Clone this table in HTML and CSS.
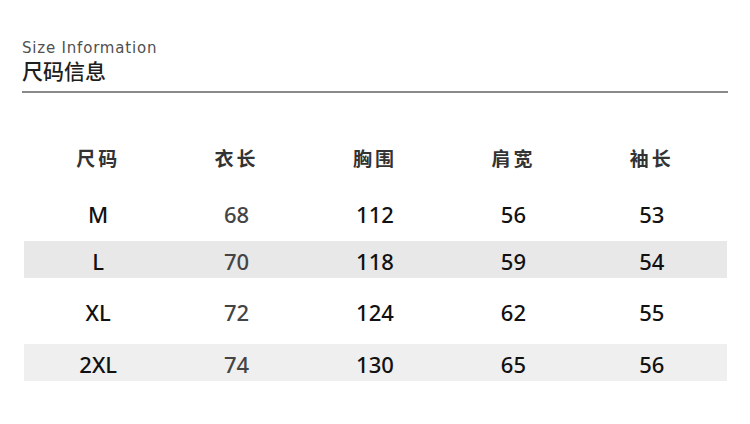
FILE: index.html
```html
<!DOCTYPE html>
<html lang="zh-CN">
<head>
<meta charset="utf-8">
<title>尺码信息</title>
<link rel="stylesheet" href="styles.css">
</head>
<body>
<div class="page">
  <header class="title-block">
    <div class="title-en">Size Information</div>
    <div class="title-cn">尺码信息</div>
  </header>
  <div class="size-table">
    <div class="row head">
      <div>尺码</div><div>衣长</div><div>胸围</div><div>肩宽</div><div>袖长</div>
    </div>
    <div class="row r-m">
      <div>M</div><div class="soft">68</div><div>112</div><div>56</div><div>53</div>
    </div>
    <div class="row shade r-l">
      <div>L</div><div class="soft">70</div><div>118</div><div>59</div><div>54</div>
    </div>
    <div class="row r-xl">
      <div>XL</div><div class="soft">72</div><div>124</div><div>62</div><div>55</div>
    </div>
    <div class="row shade light r-2xl">
      <div>2XL</div><div class="soft">74</div><div>130</div><div>65</div><div>56</div>
    </div>
  </div>
</div>
</body>
</html>
```
FILE: styles.css
```css
html, body {
  margin: 0;
  padding: 0;
  background: #ffffff;
}
.page {
  width: 750px;
  height: 424px;
  overflow: hidden;
  font-family: "Noto Sans", "Noto Sans CJK SC", sans-serif;
}
.title-block {
  margin: 0 22px 0 22px;
  padding-top: 39px;
  border-bottom: 2px solid #8a8a8a;
  height: 52px;
}
.title-en {
  font-family: "DejaVu Sans", sans-serif;
  font-size: 15px;
  line-height: 18px;
  letter-spacing: 0.8px;
  color: #505050;
}
.title-cn {
  font-family: "Noto Sans CJK SC", sans-serif;
  font-weight: 500;
  font-size: 21px;
  line-height: 27px;
  color: #1e1e1e;
}
.size-table {
  margin: 0 23px 0 24px;
  padding-top: 46px;
}
.row {
  display: grid;
  grid-template-columns: repeat(5, 1fr);
  padding: 0 6px 0 5px;
  height: 37px;
  align-items: center;
  text-align: center;
  font-size: 22px;
  font-weight: 500;
  color: #111111;
}
.row > div {
  padding-top: 3px;
}
.head {
  font-family: "Noto Sans CJK SC", sans-serif;
  font-weight: 700;
  font-size: 19px;
  letter-spacing: 3px;
  color: #333333;
}
.head > div {
  padding-top: 0;
}
.r-m { margin-top: 18px; }
.r-l { margin-top: 10px; }
.r-xl { margin-top: 14px; }
.r-2xl { margin-top: 15px; }
.shade { background: #e8e8e8; }
.shade.light { background: #efefef; }
.soft { color: #444444; }
```
